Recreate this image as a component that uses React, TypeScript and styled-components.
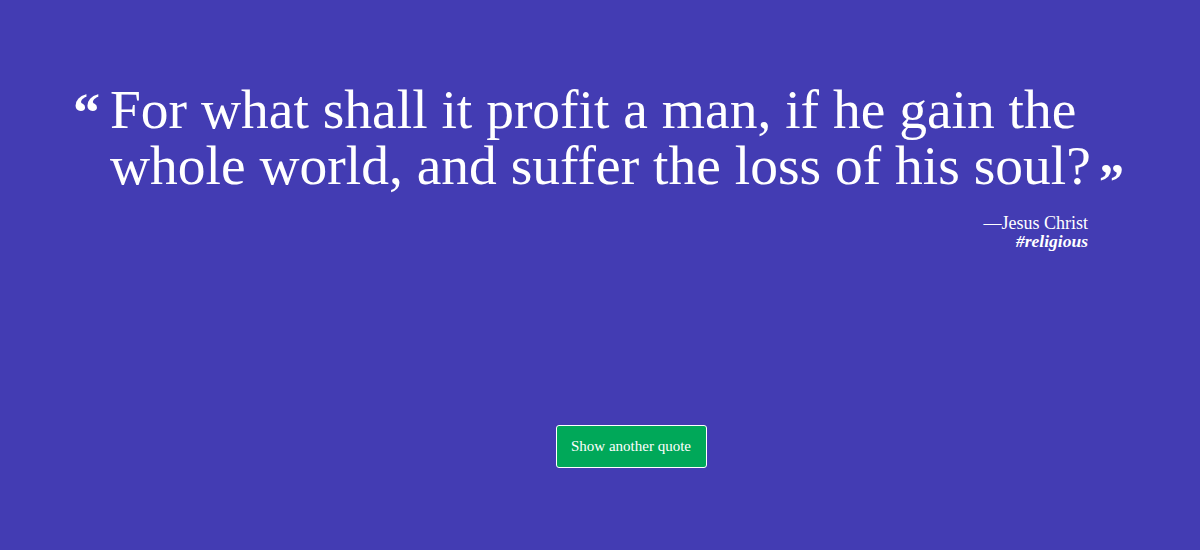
import React from "react";
import styled, { createGlobalStyle } from "styled-components";

const Global = createGlobalStyle`
  html, body { margin: 0; padding: 0; }
  body {
    background: #433cb3;
    font-family: "Liberation Serif", "DejaVu Serif", serif;
    color: #ffffff;
    width: 1200px;
    height: 550px;
    overflow: hidden;
  }
`;

const Page = styled.div`
  display: flex;
  flex-direction: column;
  align-items: center;
  height: 550px;
`;

const QuoteBox = styled.div`
  width: 1050px;
  margin-top: 82px;
  display: flex;
  flex-direction: column;
`;

const QuoteText = styled.blockquote`
  margin: 0;
  padding-left: 35px;
  position: relative;
  font-size: 55.5px;
  line-height: 56px;
  font-weight: 400;
  white-space: nowrap;
`;

const OpenMark = styled.span`
  position: absolute;
  left: -2px;
  top: 3px;
  font-size: 54px;
  font-weight: 700;
  line-height: 56px;
`;

const CloseMark = styled.span`
  font-size: 50px;
  font-weight: 700;
  display: inline-block;
  vertical-align: -14px;
  line-height: 0;
  margin-left: 8px;
`;

const Author = styled.div`
  align-self: flex-end;
  margin-right: 37px;
  margin-top: 20px;
  text-align: right;
  font-size: 18px;
  line-height: 18px;
`;

const Tag = styled.div`
  font-style: italic;
  font-weight: 700;
  font-size: 17.5px;
  line-height: 18px;
`;

const Button = styled.button`
  margin-top: 175px;
  margin-left: 62px;
  width: 151px;
  height: 43px;
  background: #00a859;
  color: #ffffff;
  border: 1px solid #ffffff;
  border-radius: 3px;
  font-family: "Liberation Serif", "DejaVu Serif", serif;
  font-size: 15px;
  cursor: pointer;
`;

export default function App() {
  return (
    <>
      <Global />
      <Page>
        <QuoteBox>
          <QuoteText>
            <OpenMark>“</OpenMark>
            For what shall it profit a man, if he gain the
            <br />
            whole world, and suffer the loss of his soul?
            <CloseMark>”</CloseMark>
          </QuoteText>
          <Author>
            —Jesus Christ
            <Tag>#religious</Tag>
          </Author>
        </QuoteBox>
        <Button>Show another quote</Button>
      </Page>
    </>
  );
}
